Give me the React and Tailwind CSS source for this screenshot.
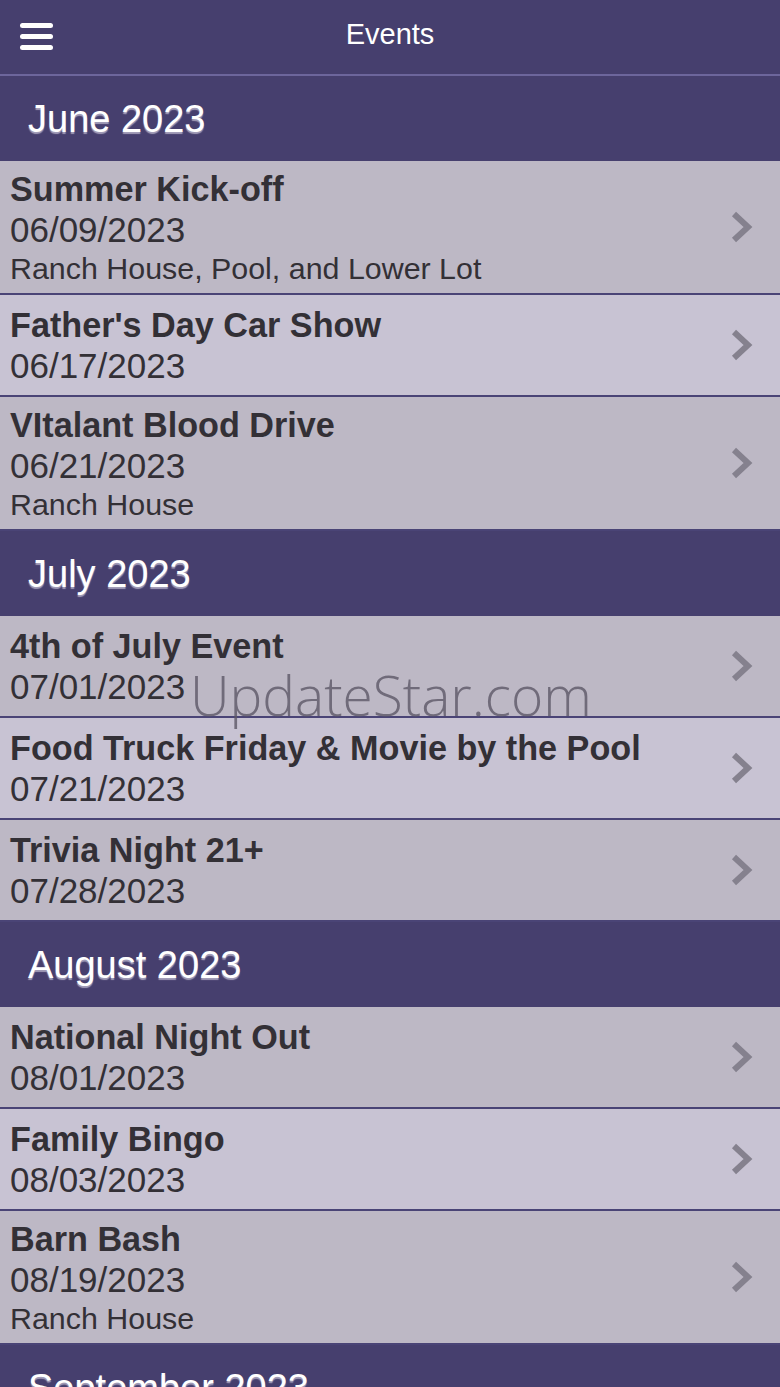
const SECTIONS = [
  {
    month: 'June 2023',
    events: [
      { title: 'Summer Kick-off', date: '06/09/2023', place: 'Ranch House, Pool, and Lower Lot' },
      { title: "Father's Day Car Show", date: '06/17/2023' },
      { title: 'VItalant Blood Drive', date: '06/21/2023', place: 'Ranch House' },
    ],
  },
  {
    month: 'July 2023',
    events: [
      { title: '4th of July Event', date: '07/01/2023' },
      { title: 'Food Truck Friday & Movie by the Pool', date: '07/21/2023' },
      { title: 'Trivia Night 21+', date: '07/28/2023' },
    ],
  },
  {
    month: 'August 2023',
    events: [
      { title: 'National Night Out', date: '08/01/2023' },
      { title: 'Family Bingo', date: '08/03/2023' },
      { title: 'Barn Bash', date: '08/19/2023', place: 'Ranch House' },
    ],
  },
  {
    month: 'September 2023',
    events: [
      { title: 'Labor Day Pool Party', date: '09/04/2023' },
      { title: 'Fall Festival', date: '09/23/2023', place: 'Ranch House' },
    ],
  },
];

function Chevron() {
  return (
    <svg width="22" height="34" viewBox="0 0 22 34" className="shrink-0">
      <polyline points="3,4 17,17 3,30" fill="none" stroke="#85818e" strokeWidth="6" strokeLinejoin="miter" />
    </svg>
  );
}

function EventRow({ event, shade }) {
  return (
    <div
      className={`flex min-h-[102px] items-center border-b-2 border-[#4a4476] pl-[10px] pr-[27px] ${
        shade ? 'bg-[#c8c3d3]' : 'bg-[#bdb8c5]'
      }`}
    >
      <div className="flex-1 pt-[8px] pb-[7px] text-[#333036]">
        <p className="text-[34.2px] font-bold leading-[40px]">{event.title}</p>
        <p className="text-[35px] leading-[41px]">{event.date}</p>
        {event.place && <p className="text-[30.4px] leading-[36px]">{event.place}</p>}
      </div>
      <Chevron />
    </div>
  );
}

export default function App() {
  return (
    <div className="relative min-h-screen bg-[#463f6e] font-['Liberation_Sans',Arial,sans-serif]">
      <header className="grid h-[76px] grid-cols-[1fr_auto_1fr] items-center border-b-2 border-[#6d669c] bg-[#463f6e] px-[20px]">
        <div className="flex w-[33px] flex-col gap-[6px] pb-[2px]">
          <span className="h-[5px] rounded-sm bg-white" />
          <span className="h-[5px] rounded-sm bg-white" />
          <span className="h-[5px] rounded-sm bg-white" />
        </div>
        <h1 className="pb-[4px] text-[29px] text-white">Events</h1>
        <div />
      </header>

      {SECTIONS.map((section) => (
        <section key={section.month}>
          <div className="flex h-[85px] items-center bg-[#463f6e] px-[28px]">
            <h2 className="text-[38px] leading-none text-white [text-shadow:0_2px_1px_#a29db8]">
              {section.month}
            </h2>
          </div>
          {section.events.map((event, i) => (
            <EventRow key={event.title} event={event} shade={i % 2 === 1} />
          ))}
        </section>
      ))}

      <div className="pointer-events-none absolute left-[190px] top-[667px] font-['Open_Sans',sans-serif] text-[55px] font-light leading-none text-[#5c5866]/80">
        UpdateStar.com
      </div>
    </div>
  );
}
